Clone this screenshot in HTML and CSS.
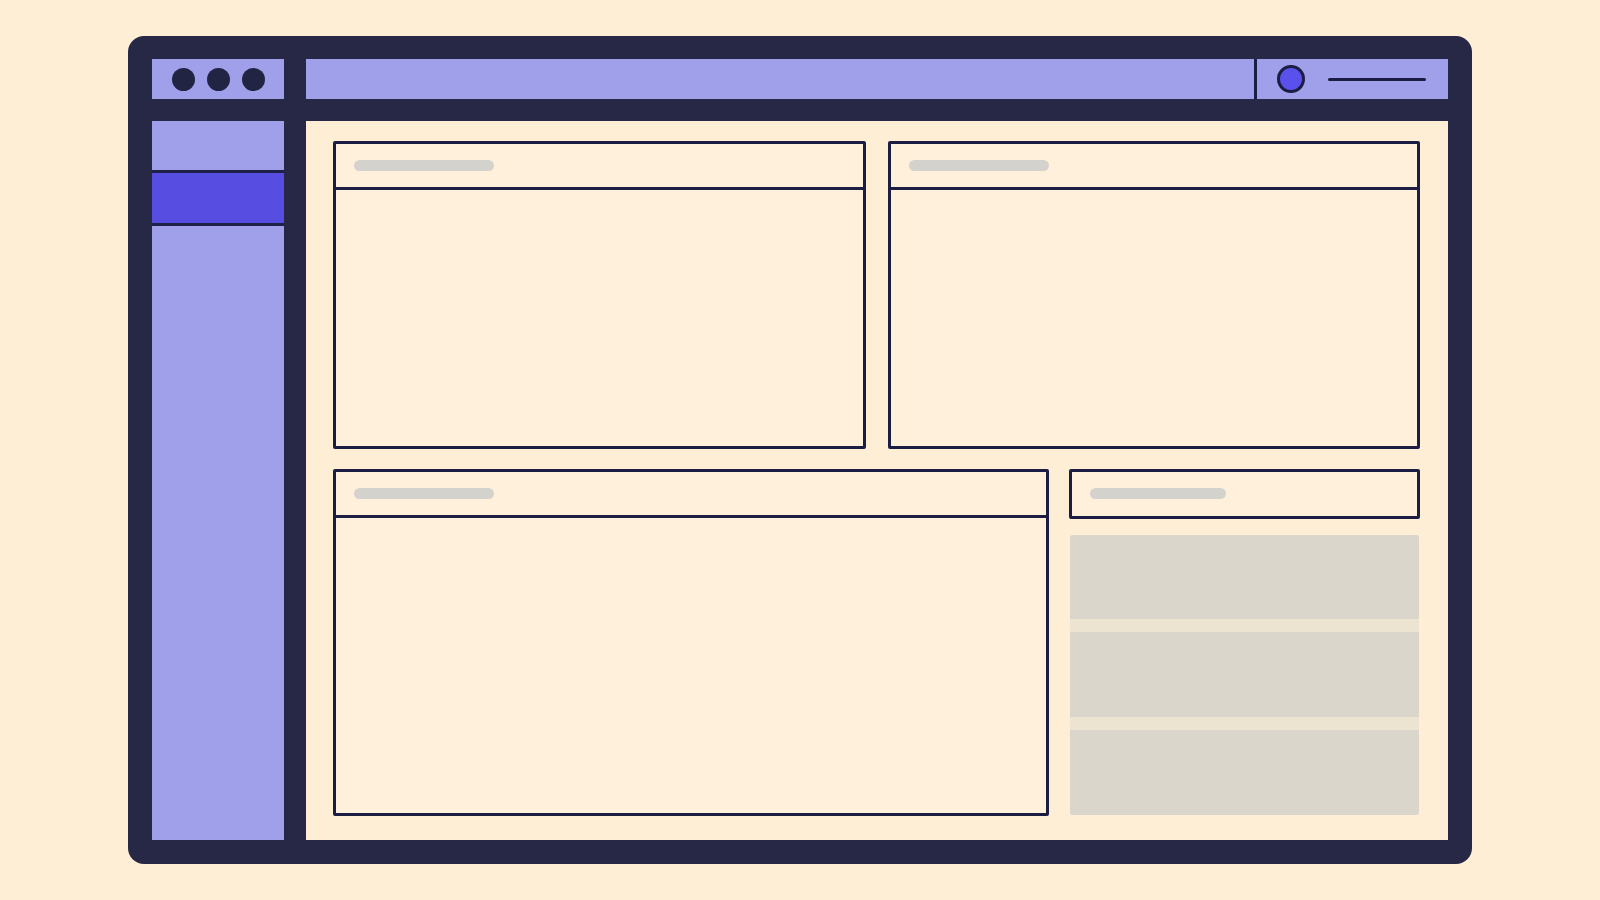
FILE: index.html
```html
<!DOCTYPE html>
<html lang="en">
<head>
    <meta charset="UTF-8">
    <meta name="viewport" content="width=device-width, initial-scale=1.0">
    <title>Dashboard Wireframe</title>
    <link rel="stylesheet" href="styles.css">
</head>
<body>
    <div class="window">
        <div class="window-dots">
            <span class="dot"></span>
            <span class="dot"></span>
            <span class="dot"></span>
        </div>
        <header class="topbar">
            <div class="account">
                <span class="avatar"></span>
                <span class="account-name"></span>
            </div>
        </header>
        <nav class="sidebar">
            <div class="nav-item"></div>
            <div class="nav-item active"></div>
        </nav>
        <main class="content">
            <div class="row row-top">
                <section class="card">
                    <div class="card-header"><span class="title-bar"></span></div>
                </section>
                <section class="card">
                    <div class="card-header"><span class="title-bar"></span></div>
                </section>
            </div>
            <div class="row row-bottom">
                <section class="card card-wide">
                    <div class="card-header"><span class="title-bar"></span></div>
                </section>
                <section class="side">
                    <div class="side-header"><span class="title-bar short"></span></div>
                    <div class="list">
                        <div class="list-item"></div>
                        <div class="list-item"></div>
                        <div class="list-item"></div>
                    </div>
                </section>
            </div>
        </main>
    </div>
</body>
</html>
```

FILE: styles.css
```css
* {
    box-sizing: border-box;
}
body {
    margin: 0;
    padding: 36px 8%;
    min-height: 100vh;
    display: flex;
    font-family: "Liberation Sans", Arial, sans-serif;
    background-color: #feeed5;
}
.window {
    flex: 1;
    display: grid;
    grid-template-columns: 132px 1fr;
    grid-template-rows: 40px 1fr;
    gap: 22px;
    padding: 23px 24px 24px;
    background-color: #262846;
    border-radius: 16px;
}
.window-dots {
    display: flex;
    align-items: center;
    justify-content: center;
    gap: 12px;
    background-color: #a09fea;
}
.dot {
    width: 23px;
    height: 23px;
    border-radius: 50%;
    background-color: #212443;
}

/* top bar */
.topbar {
    display: flex;
    justify-content: flex-end;
    background-color: #a09fea;
}
.account {
    display: flex;
    align-items: center;
    gap: 23px;
    padding: 0 22px 0 20px;
    border-left: 3px solid #1c1d42;
}
.avatar {
    width: 28px;
    height: 28px;
    border: 3px solid #1c1d42;
    border-radius: 50%;
    background-color: #5a50ec;
}
.account-name {
    width: 98px;
    height: 3px;
    border-radius: 2px;
    background-color: #1c1d42;
}

/* sidebar */
.sidebar {
    background-color: #a09fea;
}
.nav-item {
    height: 49px;
}
.nav-item.active {
    height: 56px;
    border-top: 3px solid #1f2048;
    border-bottom: 3px solid #1f2048;
    background-color: #584de1;
}

/* content */
.content {
    display: flex;
    flex-direction: column;
    gap: 20px;
    padding: 20px 28px 24px 27px;
    background-color: #feeed5;
}
.row {
    display: flex;
    gap: 20px;
}
.row-top {
    flex: 77;
    gap: 22px;
}
.row-bottom {
    flex: 87;
}
.card {
    flex: 1;
    border: 3px solid #1c1d42;
    border-radius: 2px;
    background-color: #fef0da;
}
.card-wide {
    flex: 710;
}
.card-header {
    display: flex;
    align-items: center;
    height: 46px;
    padding: 0 18px;
    border-bottom: 3px solid #1c1d42;
}
.title-bar {
    width: 140px;
    height: 11px;
    border-radius: 6px;
    background-color: #d3d2cd;
}
.title-bar.short {
    width: 136px;
}
.side {
    flex: 351;
    display: flex;
    flex-direction: column;
    gap: 16px;
}
.side-header {
    display: flex;
    align-items: center;
    height: 50px;
    padding: 0 18px;
    border: 3px solid #1c1d42;
    border-radius: 2px;
    background-color: #fef0da;
}
.list {
    flex: 1;
    display: flex;
    flex-direction: column;
    gap: 13px;
    margin: 0 1px 1px;
    border-radius: 3px;
    overflow: hidden;
    background-color: #ece4d1;
}
.list-item {
    flex: 1;
    background-color: #dad6cc;
}
```
